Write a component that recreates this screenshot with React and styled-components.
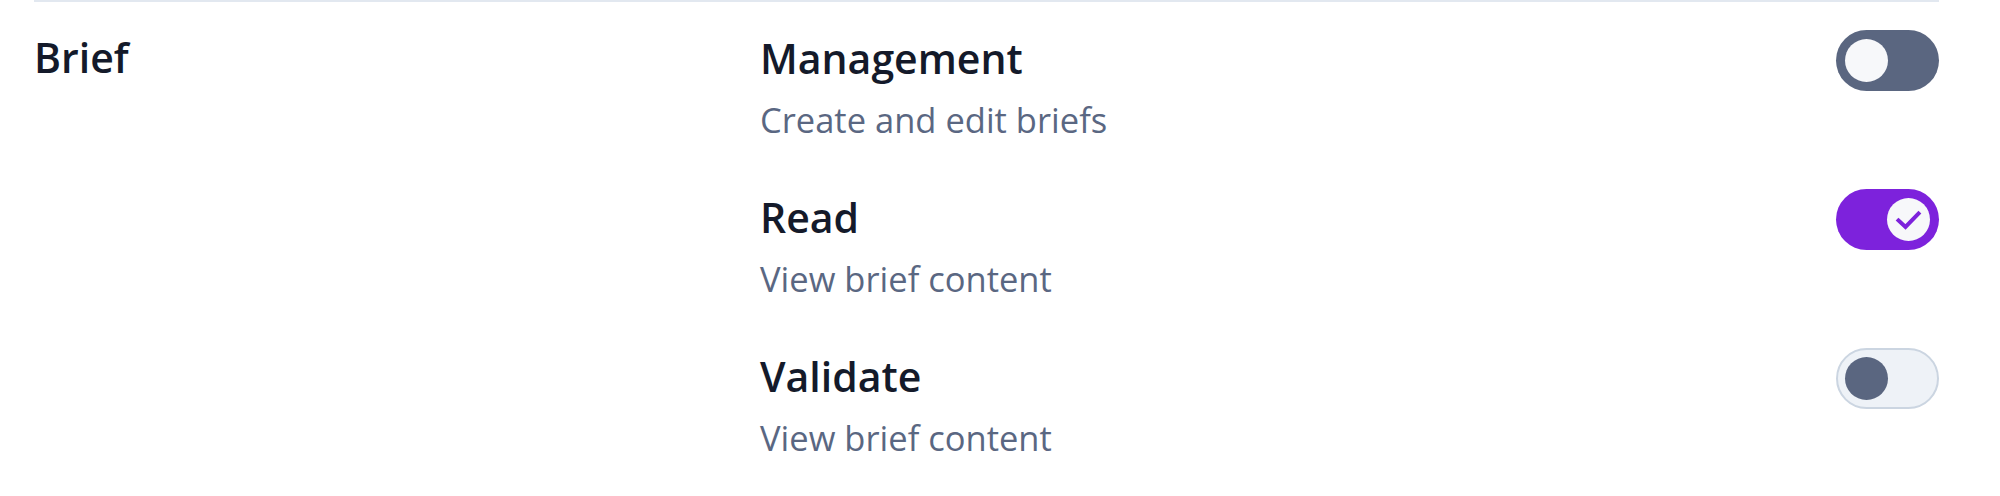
import React from "react";
import styled, { createGlobalStyle } from "styled-components";

const Global = createGlobalStyle`
  html, body { margin: 0; padding: 0; background: #ffffff; }
  body { font-family: "Open Sans", "Noto Sans", sans-serif; -webkit-font-smoothing: antialiased; }
`;

const Page = styled.div`
  padding: 0 61px 0 34px;
`;

const Section = styled.section`
  border-top: 2px solid #e2e8f0;
  display: grid;
  grid-template-columns: 726px 1fr;
  padding-top: 27px;
`;

const Label = styled.h3`
  margin: 0;
  font-size: 41px;
  line-height: 56px;
  font-weight: 600;
  color: #141a2a;
`;

const List = styled.div`
  display: flex;
  flex-direction: column;
  gap: 46px;
  padding-top: 1px;
`;

const Row = styled.div`
  display: flex;
  justify-content: space-between;
  align-items: flex-start;
`;

const Texts = styled.div`
  display: flex;
  flex-direction: column;
`;

const Title = styled.div`
  font-size: 41px;
  line-height: 56px;
  font-weight: 600;
  color: #141a2a;
`;

const Desc = styled.div`
  margin-top: 11px;
  font-size: 34.5px;
  line-height: 46px;
  font-weight: 400;
  color: #5a6782;
`;

const Track = styled.button`
  box-sizing: border-box;
  width: 103px;
  height: 61px;
  border-radius: 31px;
  display: flex;
  align-items: center;
  justify-content: ${(p) => (p.$on ? "flex-end" : "flex-start")};
  cursor: pointer;
  flex-shrink: 0;
  background: ${(p) => (p.$on ? "#7d22dc" : p.$variant === "light" ? "#eef2f7" : "#5a6680")};
  border: ${(p) => (p.$variant === "light" ? "2px solid #cbd5e1" : "0")};
  padding: ${(p) => (p.$variant === "light" ? "0 7px" : "0 9px")};
`;

const Thumb = styled.span`
  width: 43px;
  height: 43px;
  border-radius: 50%;
  background: ${(p) => (p.$variant === "light" ? "#5a6680" : "#f7f8fa")};
  display: flex;
  align-items: center;
  justify-content: center;
`;

const CheckIcon = () => (
  <svg width="28" height="28" viewBox="0 0 28 28" fill="none">
    <path d="M3.5 14.5 L10.5 21 L23.5 7.5" stroke="#7d22dc" strokeWidth="4" strokeLinecap="square" strokeLinejoin="miter" />
  </svg>
);

function Switch({ on, variant }) {
  return (
    <Track $on={on} $variant={variant} role="switch" aria-checked={on}>
      <Thumb $variant={variant}>{on && <CheckIcon />}</Thumb>
    </Track>
  );
}

const items = [
  { title: "Management", desc: "Create and edit briefs", on: false, variant: "dark" },
  { title: "Read", desc: "View brief content", on: true, variant: "dark" },
  { title: "Validate", desc: "View brief content", on: false, variant: "light" },
];

export default function App() {
  return (
    <Page>
      <Global />
      <Section>
        <Label>Brief</Label>
        <List>
          {items.map((it) => (
            <Row key={it.title}>
              <Texts>
                <Title>{it.title}</Title>
                <Desc>{it.desc}</Desc>
              </Texts>
              <Switch on={it.on} variant={it.variant} />
            </Row>
          ))}
        </List>
      </Section>
    </Page>
  );
}
